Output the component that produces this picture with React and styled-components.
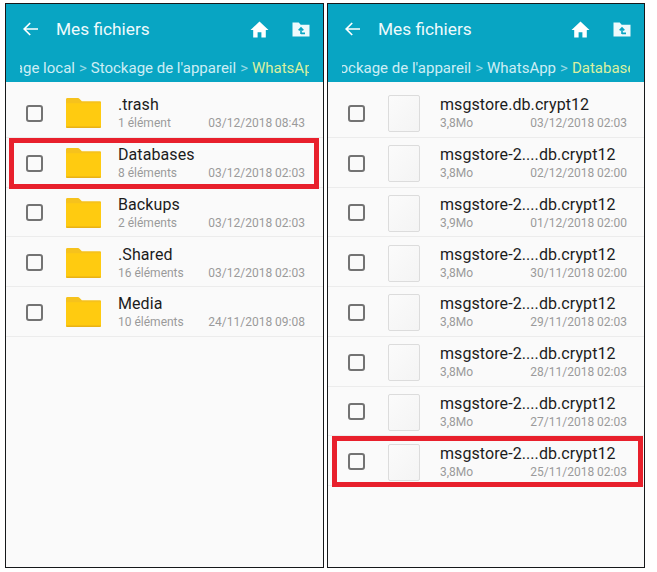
import styled, { createGlobalStyle } from "styled-components";

const GlobalStyle = createGlobalStyle`
  html, body {
    margin: 0;
    background: #fff;
    font-family: Roboto, "Liberation Sans", sans-serif;
  }
`;

const Page = styled.div`
  display: flex;
  gap: 3px;
  width: 657px;
  height: 572px;
  padding: 3px 0 3px 5px;
  box-sizing: border-box;
`;

const Panel = styled.section`
  width: ${(p) => p.$width}px;
  height: 565px;
  box-sizing: border-box;
  border: 1px solid #16181a;
  background: #fafafa;
  display: flex;
  flex-direction: column;
`;

const Header = styled.header`
  height: 78px;
  flex: none;
  background: #08a5c3;
  display: flex;
  flex-direction: column;
`;

const TopBar = styled.div`
  height: 50px;
  display: flex;
  align-items: center;
  padding: 0 13px 0 17px;
  box-sizing: border-box;
  color: #fff;
`;

const Title = styled.h1`
  margin: 0 0 0 17px;
  flex: 1;
  font-size: 17.3px;
  font-weight: 400;
  color: #eefafc;
`;

const IconRow = styled.div`
  display: flex;
  align-items: center;
  gap: 23px;
`;

const CrumbClip = styled.div`
  margin: 0 14px;
  display: flex;
  justify-content: flex-end;
  overflow: hidden;
  white-space: nowrap;
  font-size: 15px;
  line-height: 20px;
  padding-top: 4px;
  color: #cdeef5;
`;

const Crumbs = styled.div`
  flex: none;
  margin-right: ${(p) => -p.$bleed}px;
`;

const Sep = styled.span`
  margin: 0 4px;
  opacity: 0.7;
`;

const Current = styled.span`
  color: #d9f0a0;
`;

const List = styled.div`
  padding-top: 6px;
  flex: 1;
`;

const Row = styled.div`
  position: relative;
  height: 49.75px;
  box-sizing: border-box;
  border-bottom: 1px solid #ececec;
  display: flex;
  align-items: center;
  padding: 0 ${(p) => p.$right}px 0 20px;

  ${(p) =>
    p.$marked &&
    `
    &::after {
      content: "";
      position: absolute;
      left: ${p.$markLeft}px;
      right: ${p.$markRight}px;
      top: 0;
      bottom: -2px;
      border: 5px solid #e8202c;
      pointer-events: none;
    }
  `}
`;

const Checkbox = styled.span`
  flex: none;
  width: 17px;
  height: 17px;
  margin-top: 2px;
  box-sizing: border-box;
  border: 2px solid #737373;
  border-radius: 3px;
`;

const Thumb = styled.div`
  flex: none;
  margin: 3px 0 0 23px;
  width: 32px;
  height: 37px;
  box-sizing: border-box;
  border: 1px solid #dcdcdc;
  border-radius: 2px;
  background: linear-gradient(135deg, #fbfbfb, #f4f4f4);
`;

const FolderWrap = styled.div`
  flex: none;
  margin: 2px 0 0 23px;
  width: 35px;
  height: 30px;
  display: flex;
`;

const Details = styled.div`
  flex: 1;
  margin-left: ${(p) => p.$gap}px;
  margin-top: 2px;
  min-width: 0;
`;

const Name = styled.div`
  font-size: 16px;
  letter-spacing: 0.08px;
  line-height: 20px;
  color: #1c1c1c;
`;

const Meta = styled.div`
  display: flex;
  justify-content: space-between;
  font-size: 12px;
  line-height: 15px;
  margin-top: 1px;
  color: #9a9a9a;
`;

const ArrowIcon = () => (
  <svg width="16" height="14" viewBox="0 0 16 14" fill="none" stroke="#fff" strokeWidth="1.7">
    <path d="M15 7H1.5M7.2 1L1.2 7l6 6" />
  </svg>
);

const HomeIcon = () => (
  <svg width="19" height="17" viewBox="0 0 19 17" fill="#fff">
    <path d="M9.5 0.5L0.5 9h2.7v7.5h4.4v-5.2h3.8v5.2h4.4V9h2.7z" />
  </svg>
);

const FolderUpIcon = () => (
  <svg width="18" height="15" viewBox="0 0 18 15">
    <path fill="#eefafc" d="M0.5 0.5h6.2l2 2.2h8.8v11.8H0.5z" />
    <path fill="none" stroke="#08a5c3" strokeWidth="1.6" d="M9 12V6.5M6.7 8.4L9 6l2.3 2.4M9 11.4h4" />
  </svg>
);

const FolderIcon = () => (
  <svg width="35" height="30" viewBox="0 0 36 32" preserveAspectRatio="none">
    <path fill="#f6c21c" d="M1.5 0h10.5c1 0 1.6 .4 2.3 1.2l2 2.3H35c.6 0 1 .4 1 1V30.5c0 .9-.6 1.5-1.5 1.5H1.5C.6 32 0 31.4 0 30.5V1.5C0 .6.6 0 1.5 0z" />
    <path fill="#ffcb10" d="M0 5.5h36V30.5c0 .9-.6 1.5-1.5 1.5H1.5C.6 32 0 31.4 0 30.5z" />
    <path fill="#e9b215" d="M0 30.5h36c0 .9-.6 1.5-1.5 1.5H1.5C.6 32 0 31.4 0 30.5z" />
  </svg>
);

const folders = [
  { name: ".trash", meta: "1 élément", date: "03/12/2018 08:43" },
  { name: "Databases", meta: "8 éléments", date: "03/12/2018 02:03", marked: true },
  { name: "Backups", meta: "2 éléments", date: "03/12/2018 02:03" },
  { name: ".Shared", meta: "16 éléments", date: "03/12/2018 02:03" },
  { name: "Media", meta: "10 éléments", date: "24/11/2018 09:08" },
];

const backup = "msgstore-2....db.crypt12";

const files = [
  { name: "msgstore.db.crypt12", meta: "3,8Mo", date: "03/12/2018 02:03" },
  { name: backup, meta: "3,8Mo", date: "02/12/2018 02:00" },
  { name: backup, meta: "3,9Mo", date: "01/12/2018 02:00" },
  { name: backup, meta: "3,8Mo", date: "30/11/2018 02:00" },
  { name: backup, meta: "3,8Mo", date: "29/11/2018 02:03" },
  { name: backup, meta: "3,8Mo", date: "28/11/2018 02:03" },
  { name: backup, meta: "3,8Mo", date: "27/11/2018 02:03" },
  { name: backup, meta: "3,8Mo", date: "25/11/2018 02:03", marked: true },
];

const BrowserHeader = ({ bleed, path, current }) => (
  <Header>
    <TopBar>
      <ArrowIcon />
      <Title>Mes fichiers</Title>
      <IconRow>
        <HomeIcon />
        <FolderUpIcon />
      </IconRow>
    </TopBar>
    <CrumbClip>
      <Crumbs $bleed={bleed}>
        {path.map((part) => (
          <span key={part}>
            {part}
            <Sep>&gt;</Sep>
          </span>
        ))}
        <Current>{current}</Current>
      </Crumbs>
    </CrumbClip>
  </Header>
);

const App = () => {
  return (
    <>
      <GlobalStyle />
      <Page>
        <Panel $width={319}>
          <BrowserHeader bleed={12} path={["Stockage local", "Stockage de l'appareil"]} current="WhatsApp" />
          <List>
            {folders.map((item) => (
              <Row key={item.name} $right={18} $marked={item.marked} $markLeft={3} $markRight={4}>
                <Checkbox />
                <FolderWrap>
                  <FolderIcon />
                </FolderWrap>
                <Details $gap={17}>
                  <Name>{item.name}</Name>
                  <Meta>
                    <span>{item.meta}</span>
                    <span>{item.date}</span>
                  </Meta>
                </Details>
              </Row>
            ))}
          </List>
        </Panel>
        <Panel $width={318}>
          <BrowserHeader bleed={13} path={["Stockage local", "Stockage de l'appareil", "WhatsApp"]} current="Databases" />
          <List>
            {files.map((item) => (
              <Row key={item.date} $right={17} $marked={item.marked} $markLeft={4} $markRight={1}>
                <Checkbox />
                <Thumb />
                <Details $gap={20}>
                  <Name>{item.name}</Name>
                  <Meta>
                    <span>{item.meta}</span>
                    <span>{item.date}</span>
                  </Meta>
                </Details>
              </Row>
            ))}
          </List>
        </Panel>
      </Page>
    </>
  );
};

export default App;
